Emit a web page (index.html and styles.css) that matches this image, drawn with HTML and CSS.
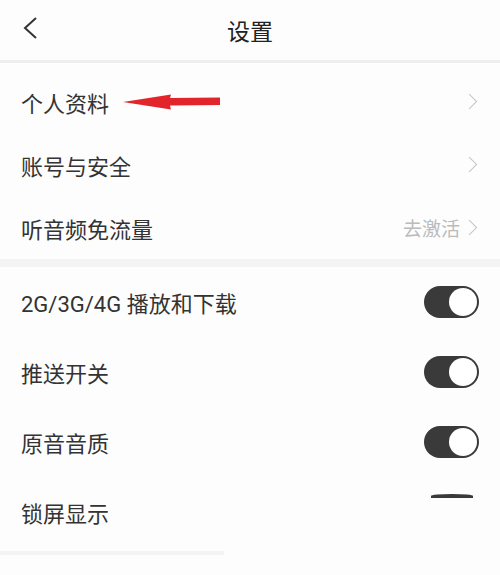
FILE: index.html
```html
<!DOCTYPE html>
<html lang="zh-CN">
<head>
    <meta charset="UTF-8">
    <meta name="viewport" content="width=device-width, initial-scale=1.0">
    <title>设置</title>
    <link rel="stylesheet" href="styles.css">
</head>
<body>
    <div class="header">
        <svg class="back" width="16" height="24" viewBox="0 0 16 24">
            <path d="M14 2 L3 12 L14 22" fill="none" stroke="#333" stroke-width="2"/>
        </svg>
        <div class="title">设置</div>
    </div>

    <div class="group first">
        <div class="row">
            <span class="label">个人资料</span>
            <svg class="mark" width="100" height="20" viewBox="0 0 100 20">
                <path d="M2 10 L50 2.5 L49 6 L99 5.5 L99 13 L49 13.5 L50 17.5 Z" fill="#e2242b"/>
            </svg>
            <span class="arrow"></span>
        </div>
        <div class="row">
            <span class="label">账号与安全</span>
            <span class="arrow"></span>
        </div>
        <div class="row">
            <span class="label">听音频免流量</span>
            <span class="hint">去激活</span>
            <span class="arrow"></span>
        </div>
    </div>

    <div class="group">
        <div class="row">
            <span class="label">2G/3G/4G 播放和下载</span>
            <span class="switch"></span>
        </div>
        <div class="row">
            <span class="label">推送开关</span>
            <span class="switch"></span>
        </div>
        <div class="row">
            <span class="label">原音音质</span>
            <span class="switch"></span>
        </div>
        <div class="row">
            <span class="label">锁屏显示</span>
            <span class="switch-edge"></span>
        </div>
    </div>
    <div class="tail"></div>
</body>
</html>
```

FILE: styles.css
```css
body {
    font-family: Roboto, "Noto Sans CJK SC", sans-serif;
    background-color: #fdfdfd;
    color: #333;
    margin: 0;
}
.header {
    height: 60px;
    display: flex;
    align-items: center;
    justify-content: center;
    position: relative;
    border-bottom: 3px solid #eeeeee;
}
.back {
    position: absolute;
    left: 22px;
    top: 16px;
}
.title {
    font-size: 23px;
    color: #222;
}
.group {
    background: #fdfdfd;
}
.group.first {
    padding-top: 7px;
    border-bottom: 8px solid #f4f4f4;
}
.row {
    display: flex;
    align-items: center;
    padding: 0 21px;
    height: 70px;
    font-size: 22px;
}
.group.first .row {
    height: 63px;
}
.label {
    flex: none;
}
.mark {
    margin-left: 12px;
}
.hint {
    margin-left: auto;
    font-size: 19px;
    color: #bbb;
}
.arrow {
    margin-left: auto;
    width: 10px;
    height: 10px;
    border-top: 1.5px solid #c4c4c4;
    border-right: 1.5px solid #c4c4c4;
    transform: rotate(45deg);
    margin-right: 4px;
}
.hint + .arrow {
    margin-left: 4px;
}
.switch {
    margin-left: auto;
    width: 55px;
    height: 32px;
    border-radius: 16px;
    background: #3a3a3a;
    position: relative;
}
.switch::after {
    content: "";
    position: absolute;
    right: 2px;
    top: 2px;
    width: 28px;
    height: 28px;
    border-radius: 50%;
    background: #fff;
}
.switch-edge {
    margin-left: auto;
    margin-right: 6px;
    align-self: flex-start;
    margin-top: 17px;
    width: 42px;
    height: 4px;
    border-radius: 50% 50% 0 0;
    background: #3a3a3a;
}
.tail {
    width: 224px;
    height: 4px;
    margin-top: 4px;
    background: #f3f3f3;
}
```
